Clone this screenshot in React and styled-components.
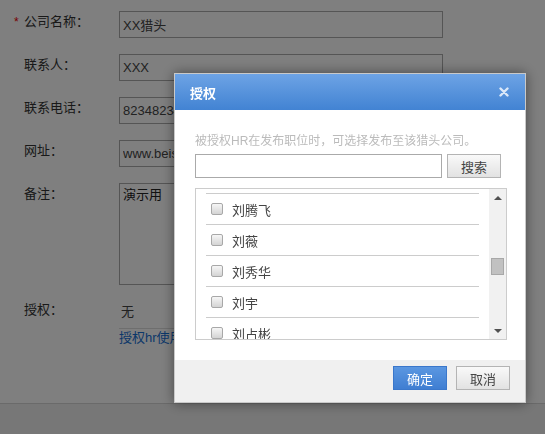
import React from "react";
import styled, { createGlobalStyle } from "styled-components";

const GlobalStyle = createGlobalStyle`
    html, body {
        margin: 0;
        padding: 0;
        background: #eeeeee;
    }
    body {
        font-family: "Liberation Sans", "Noto Sans CJK SC", sans-serif;
        font-size: 12px;
        color: #333;
    }
    * {
        box-sizing: border-box;
    }
`;

// page under the overlay
const Page = styled.div`
    background: #fff;
    height: 404px;
    border-bottom: 1px solid #d4d4d4;
    padding-top: 11px;
    overflow: hidden;
`;

const Row = styled.div`
    display: grid;
    grid-template-columns: 119px 324px;
    margin-bottom: 16px;
`;

const Label = styled.div`
    padding-left: 24px;
    padding-top: ${(props) => (props.flush ? "0" : "2px")};
    line-height: 18px;
    font-size: 13px;
    color: #333;
`;

const Required = styled.span`
    display: inline-block;
    width: 10px;
    margin-left: -10px;
    color: #e00;
    font-size: 12px;
`;

const Input = styled.input`
    width: 324px;
    height: 27px;
    border: 1px solid #aaa;
    padding: 0 3px;
    font-family: inherit;
    font-size: 13px;
    color: #444;
    outline: none;
`;

const TextArea = styled.textarea`
    width: 324px;
    height: 102px;
    border: 1px solid #aaa;
    padding: 2px 3px;
    font-family: inherit;
    font-size: 13px;
    line-height: 18px;
    color: #222;
    resize: none;
    outline: none;
`;

const AuthValue = styled.div`
    line-height: 22px;
    padding-left: 2px;
    padding-bottom: 5px;
    border-bottom: 1px solid #ddd;
    font-size: 13px;
    color: #444;
`;

const AuthLink = styled.a`
    display: block;
    line-height: 18px;
    font-size: 13px;
    color: #1870d4;
    text-decoration: none;
`;

// overlay + dialog
const Overlay = styled.div`
    position: fixed;
    inset: 0;
    background: rgba(0, 0, 0, 0.5);
`;

const Dialog = styled.div`
    position: fixed;
    left: 174px;
    top: 73px;
    width: 352px;
    background: #fff;
    border: 1px solid #c9c9c9;
    box-shadow: 0 0 12px rgba(0, 0, 0, 0.45);
`;

const Header = styled.div`
    height: 36px;
    display: flex;
    align-items: center;
    justify-content: space-between;
    padding: 0 16px 0 15px;
    background: linear-gradient(#6da3e5, #4283d3);
`;

const Title = styled.div`
    color: #fff;
    font-weight: bold;
    font-size: 13px;
`;

const Close = styled.button`
    border: none;
    background: none;
    padding: 0;
    width: 10px;
    height: 10px;
    display: flex;
    cursor: pointer;
`;

const Body = styled.div`
    padding: 22px 18px 20px 20px;
`;

const Hint = styled.div`
    line-height: 18px;
    margin-bottom: 4px;
    color: #bbb;
    font-size: 12px;
`;

const SearchRow = styled.div`
    display: flex;
    gap: 5px;
`;

const SearchInput = styled.input`
    width: 247px;
    height: 24px;
    border: 1px solid #aaa;
    outline: none;
    padding: 0 4px;
`;

const Button = styled.button`
    width: 54px;
    height: 24px;
    padding: 0;
    font-family: inherit;
    font-size: 13px;
    cursor: pointer;
    border: 1px solid ${(props) => (props.primary ? "#3a77cb" : "#b4b4b4")};
    color: ${(props) => (props.primary ? "#fff" : "#444")};
    background: ${(props) =>
        props.primary
            ? "linear-gradient(#5b97e1, #3f7ed2)"
            : "linear-gradient(#f9f9f9, #e2e2e2)"};
`;

const ListBox = styled.div`
    margin-top: 10px;
    height: 152px;
    border: 1px solid #ccc;
    display: flex;
`;

const Viewport = styled.div`
    flex: 1;
    overflow: hidden;
`;

const List = styled.ul`
    list-style: none;
    margin: -26px 10px 0;
    padding: 0;
`;

const Item = styled.li`
    height: 31px;
    border-bottom: 1px solid #ccc;
    display: flex;
    align-items: center;
    gap: 9px;
    padding-left: 5px;
    font-size: 13px;
    color: #444;
`;

const Checkbox = styled.span`
    width: 12px;
    height: 12px;
    border: 1px solid #a8a8a8;
    border-radius: 2px;
    background: linear-gradient(#f6f6f6, #d4d4d4);
    flex-shrink: 0;
`;

const Scrollbar = styled.div`
    width: 17px;
    background: #f1f1f1;
    display: flex;
    flex-direction: column;
`;

const Arrow = styled.div`
    height: 17px;
    display: flex;
    align-items: center;
    justify-content: center;
    &::after {
        content: "";
        border-left: 4px solid transparent;
        border-right: 4px solid transparent;
        ${(props) =>
            props.down
                ? "border-top: 4px solid #505050;"
                : "border-bottom: 4px solid #505050;"}
    }
`;

const Track = styled.div`
    flex: 1;
    display: flex;
    justify-content: center;
`;

const Thumb = styled.div`
    width: 13px;
    height: 17px;
    margin-top: ${(props) => props.offset}px;
    background: #c1c1c1;
    border: 1px solid #a8a8a8;
`;

const Footer = styled.div`
    height: 42px;
    background: #f0f0f0;
    display: flex;
    justify-content: flex-end;
    align-items: flex-start;
    gap: 9px;
    padding: 6px 15px 0 0;
`;

const fields = [
    { label: "公司名称：", value: "XX猎头", required: true },
    { label: "联系人：", value: "XXX" },
    { label: "联系电话：", value: "82348234" },
    { label: "网址：", value: "www.beisen.com" },
];

const names = ["刘晓东", "刘腾飞", "刘薇", "刘秀华", "刘宇", "刘占彬", "刘振", "马丽"];

const App = () => {
    return (
        <>
            <GlobalStyle />
            <Page>
                {fields.map((f) => (
                    <Row key={f.label}>
                        <Label>
                            {f.required && <Required>*</Required>}
                            {f.label}
                        </Label>
                        <Input defaultValue={f.value} />
                    </Row>
                ))}
                <Row>
                    <Label>备注：</Label>
                    <TextArea defaultValue="演示用" />
                </Row>
                <Row>
                    <Label flush>授权：</Label>
                    <div>
                        <AuthValue>无</AuthValue>
                        <AuthLink href="#">授权hr使用</AuthLink>
                    </div>
                </Row>
            </Page>
            <Overlay />
            <Dialog>
                <Header>
                    <Title>授权</Title>
                    <Close aria-label="关闭">
                        <svg width="10" height="10" viewBox="0 0 10 10">
                            <path
                                d="M1.5 1.5 L8.5 8.5 M8.5 1.5 L1.5 8.5"
                                stroke="#dbe8f8"
                                strokeWidth="2.4"
                                strokeLinecap="round"
                            />
                        </svg>
                    </Close>
                </Header>
                <Body>
                    <Hint>被授权HR在发布职位时，可选择发布至该猎头公司。</Hint>
                    <SearchRow>
                        <SearchInput />
                        <Button>搜索</Button>
                    </SearchRow>
                    <ListBox>
                        <Viewport>
                            <List>
                                {names.map((n) => (
                                    <Item key={n}>
                                        <Checkbox />
                                        {n}
                                    </Item>
                                ))}
                            </List>
                        </Viewport>
                        <Scrollbar>
                            <Arrow />
                            <Track>
                                <Thumb offset={52} />
                            </Track>
                            <Arrow down />
                        </Scrollbar>
                    </ListBox>
                </Body>
                <Footer>
                    <Button primary>确定</Button>
                    <Button>取消</Button>
                </Footer>
            </Dialog>
        </>
    );
};

export default App;
